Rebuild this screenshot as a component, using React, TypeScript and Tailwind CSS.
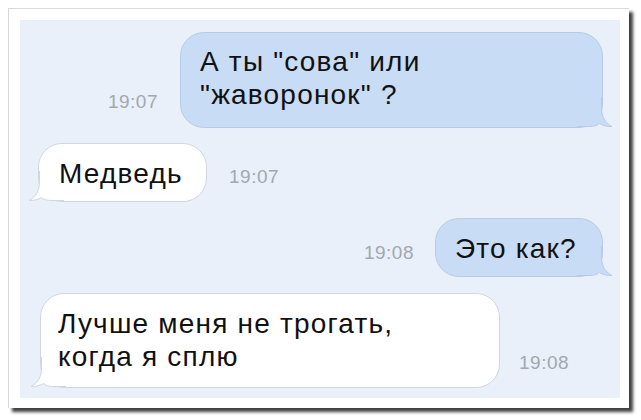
import React from "react";

const TAIL_FILL_D =
  "M0 0 H24.5 V10 C24.5 20 28 26 35 29.5 C30 29.8 26 28.5 22.5 26.5 C20 28.5 17 29.5 12 29.5 H0 Z";
const TAIL_STROKE_D =
  "M24.5 0 V10 C24.5 20 28 26 35 29.5 C30 29.8 26 28.5 22.5 26.5 C20 28.5 17 29.5 12 29.5 H0";

function SentTail({ fill, stroke }: { fill: string; stroke: string }) {
  return (
    <svg
      className="absolute right-[-11px] bottom-0"
      width="36"
      height="30"
      viewBox="0 0 36 30"
    >
      <path d={TAIL_FILL_D} fill={fill} />
      <path d={TAIL_STROKE_D} fill="none" stroke={stroke} strokeWidth="1" />
    </svg>
  );
}

function RecvTail({ fill, stroke }: { fill: string; stroke: string }) {
  return (
    <svg
      className="absolute left-[-11px] bottom-0"
      width="36"
      height="30"
      viewBox="0 0 36 30"
    >
      <g transform="translate(36 0) scale(-1 1)">
        <path d={TAIL_FILL_D} fill={fill} />
        <path d={TAIL_STROKE_D} fill="none" stroke={stroke} strokeWidth="1" />
      </g>
    </svg>
  );
}

const font = { fontFamily: '"Liberation Sans", Arial, sans-serif' };

const SENT_FILL = "#c9dcf6";
const SENT_STROKE = "#b7cbe7";
const RECV_FILL = "#ffffff";
const RECV_STROKE = "#d3d7dd";

export default function App() {
  return (
    <div
      className="w-[641px] h-[420px] bg-white pl-[8px] pt-[8px]"
      style={font}
    >
      <div className="w-[621px] h-[400px] bg-white border-l border-t border-[#d9d9d9] pl-[11px] pt-[11px] shadow-[4px_4px_3px_rgba(0,0,0,0.75)]">
        <div className="w-[600px] h-[378px] bg-[#e9f0fa] flex flex-col pt-[12px] text-[#111]">
          {/* Row 1 */}
          <div className="flex justify-end items-end pr-[17px] gap-[22px]">
            <span className="text-[19px] leading-[20px] tracking-[0.5px] text-[#a3a8ae] mb-[16px]">
              19:07
            </span>
            <div className="relative w-[423px] h-[96px] rounded-[24px] bg-[#c9dcf6] border border-[#b7cbe7] px-[19px] pt-[12px] text-[28px] leading-[33px] tracking-[1.2px]">
              <SentTail fill={SENT_FILL} stroke={SENT_STROKE} />
              <span className="relative">
                А ты "сова" или
                <br />
                "жаворонок" ?
              </span>
            </div>
          </div>

          {/* Row 2 */}
          <div className="flex items-end pl-[18px] gap-[22px] mt-[15px]">
            <div className="relative w-[169px] h-[59px] rounded-[24px] bg-white border border-[#d3d7dd] pl-[20px] pt-[13px] text-[28px] leading-[33px] tracking-[1.2px]">
              <RecvTail fill={RECV_FILL} stroke={RECV_STROKE} />
              <span className="relative">Медведь</span>
            </div>
            <span className="text-[19px] leading-[20px] tracking-[0.5px] text-[#a3a8ae] mb-[15px]">
              19:07
            </span>
          </div>

          {/* Row 3 */}
          <div className="flex justify-end items-end pr-[17px] gap-[21px] mt-[16px]">
            <span className="text-[19px] leading-[20px] tracking-[0.5px] text-[#a3a8ae] mb-[14px]">
              19:08
            </span>
            <div className="relative w-[168px] h-[59px] rounded-[24px] bg-[#c9dcf6] border border-[#b7cbe7] pl-[19px] pt-[13px] text-[28px] leading-[33px] tracking-[1.2px]">
              <SentTail fill={SENT_FILL} stroke={SENT_STROKE} />
              <span className="relative">Это как?</span>
            </div>
          </div>

          {/* Row 4 */}
          <div className="flex items-end pl-[20px] gap-[19px] mt-[16px]">
            <div className="relative w-[460px] h-[95px] rounded-[24px] bg-white border border-[#d3d7dd] pl-[17px] pt-[13px] text-[28px] leading-[33px] tracking-[1.2px]">
              <RecvTail fill={RECV_FILL} stroke={RECV_STROKE} />
              <span className="relative">
                Лучше меня не трогать,
                <br />
                когда я сплю
              </span>
            </div>
            <span className="text-[19px] leading-[20px] tracking-[0.5px] text-[#a3a8ae] mb-[15px]">
              19:08
            </span>
          </div>
        </div>
      </div>
    </div>
  );
}
